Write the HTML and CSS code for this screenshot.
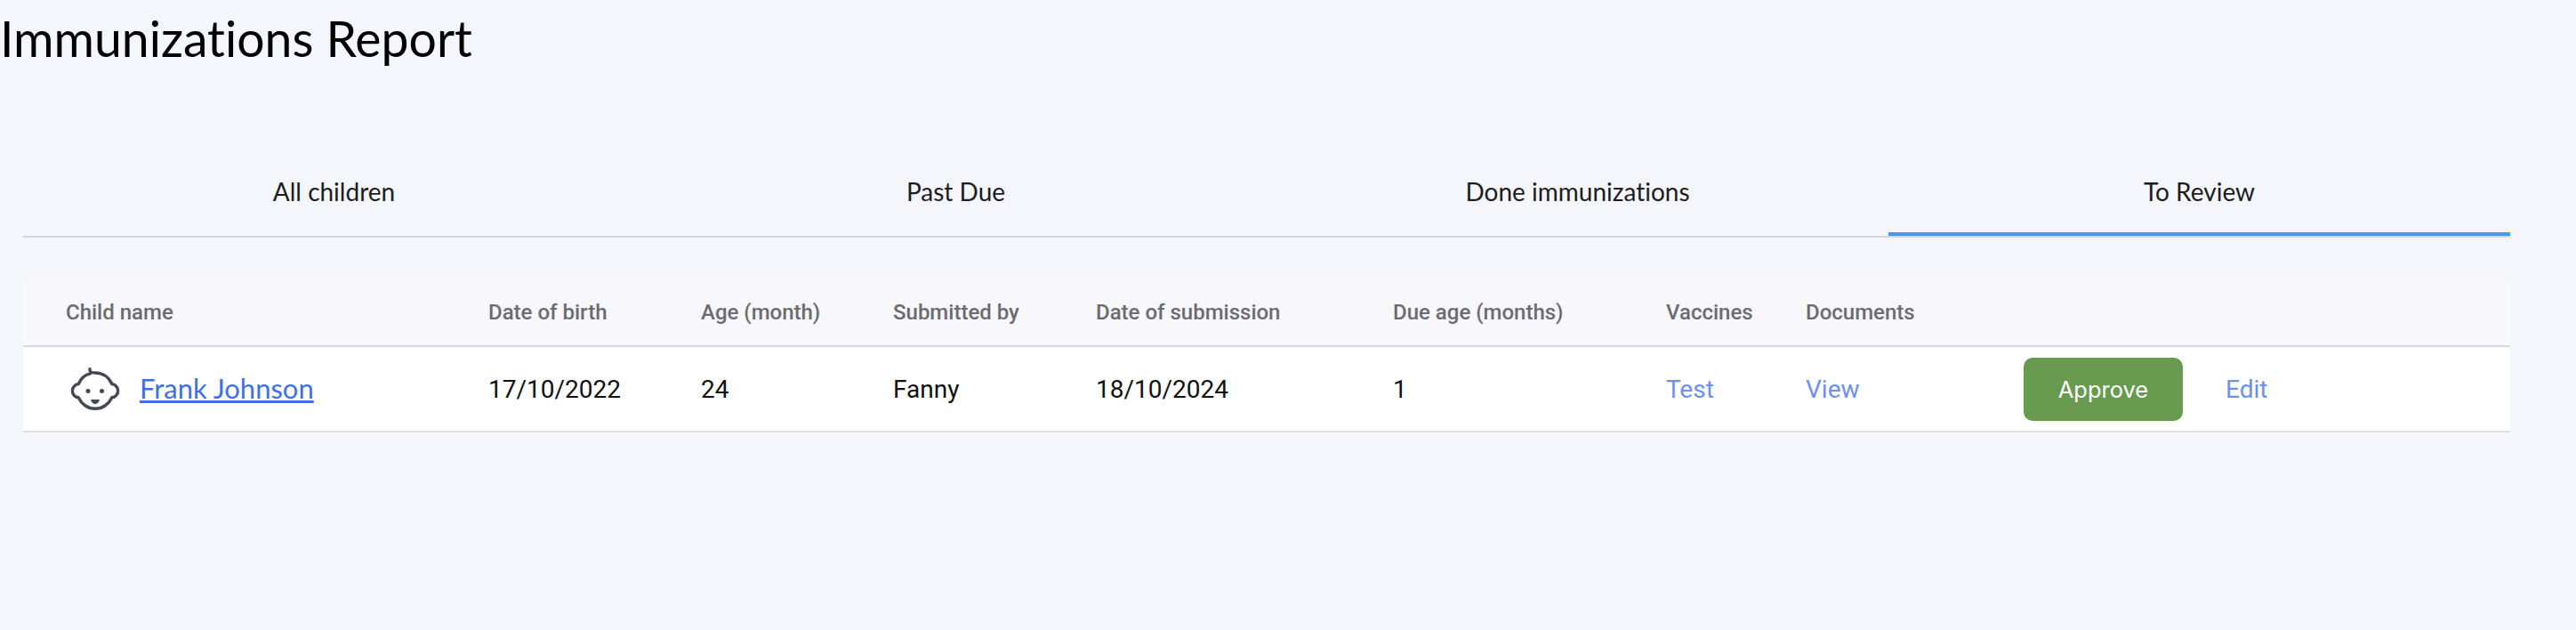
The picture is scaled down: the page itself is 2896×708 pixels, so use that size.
FILE: index.html
```html
<!DOCTYPE html>
<html lang="en">
<head>
  <meta charset="UTF-8" />
  <title>Immunizations Report</title>
  <link rel="stylesheet" href="styles.css">
</head>
<body>
  <h1 class="page-title">Immunizations Report</h1>
  <div class="report">
    <div class="tabs">
      <div class="tab">All children</div>
      <div class="tab">Past Due</div>
      <div class="tab">Done immunizations</div>
      <div class="tab tab-active">To Review</div>
    </div>
    <div class="table">
      <div class="table-row table-head">
        <div>Child name</div>
        <div>Date of birth</div>
        <div>Age (month)</div>
        <div>Submitted by</div>
        <div>Date of submission</div>
        <div>Due age (months)</div>
        <div>Vaccines</div>
        <div>Documents</div>
        <div></div>
      </div>
      <div class="table-row table-body">
        <div class="child">
          <svg class="child-icon" viewBox="0 0 56 48" width="56" height="48" fill="none" stroke="#454a52" stroke-width="3.4" stroke-linecap="round" stroke-linejoin="round">
            <path d="M22 1.800C21.500 5 24 6 28 6C36.500 6 43.500 11 46.800 18.500A7.700 7.700 0 0 1 46.800 33.800C43.500 41 36.500 46.300 28 46.300C19.500 46.300 12.500 41 9.200 33.800A7.700 7.700 0 0 1 9.200 18.500C12 12 17 8 22.500 6.800"/>
            <circle cx="20" cy="26.500" r="2.500" fill="#454a52" stroke="none"/>
            <circle cx="35.500" cy="26.500" r="2.500" fill="#454a52" stroke="none"/>
            <path d="M23 36H33C32.500 39 30 41 28 41C26 41 23.500 39 23 36Z" fill="#454a52" stroke="none"/>
          </svg>
          <a class="child-link" href="#">Frank Johnson</a>
        </div>
        <div>17/10/2022</div>
        <div>24</div>
        <div>Fanny</div>
        <div>18/10/2024</div>
        <div>1</div>
        <div><a class="link" href="#">Test</a></div>
        <div><a class="link" href="#">View</a></div>
        <div class="actions">
          <button class="btn-approve">Approve</button>
          <a class="link link-edit" href="#">Edit</a>
        </div>
      </div>
    </div>
  </div>
</body>
</html>
```

FILE: styles.css
```css
body {
  margin: 0;
  background: #f5f6fb;
  font-family: Roboto, Arial, sans-serif;
  color: #111;
}
.page-title {
  margin: 0;
  padding-top: 10px;
  font-family: Lato, Arial, sans-serif;
  font-size: 55.300px;
  line-height: 66px;
  font-weight: 400;
  font-variant-ligatures: none;
  color: #000;
}
.report {
  padding: 0 74px 0 26px;
}
.tabs {
  display: grid;
  grid-template-columns: repeat(4, 1fr);
  margin-top: 104px;
  border-bottom: 2px solid #d3d6de;
}
.tab {
  padding: 10px 0 21px;
  height: 50px;
  line-height: 50px;
  text-align: center;
  font-family: Lato, Arial, sans-serif;
  font-size: 28px;
  font-variant-ligatures: none;
  color: #1c1c1f;
  border-bottom: 4px solid transparent;
}
.tab-active {
  border-bottom-color: #4a95ea;
}
.table {
  margin-top: 47px;
}
.table-row {
  display: grid;
  grid-template-columns: 475px 239px 216px 228px 334px 307px 157px 245px 1fr;
  padding-left: 48px;
  align-items: center;
}
.table-head {
  height: 74px;
  background: #f7f7fc;
  border-bottom: 2px solid #d8d8de;
  font-size: 24px;
  font-weight: 500;
  color: #6b6b70;
}
.table-body {
  height: 94px;
  background: #fff;
  border-bottom: 2px solid #e0e0e3;
  font-size: 28px;
}
.child {
  display: flex;
  align-items: center;
  gap: 22px;
  padding-left: 5px;
}
.child-link {
  margin-bottom: 3px;
  font-family: Lato, Arial, sans-serif;
  font-size: 31px;
  font-variant-ligatures: none;
  color: #3f6fe3;
  text-decoration-thickness: 3px;
}
.link {
  color: #6d8ff0;
  text-decoration: none;
}
.actions {
  display: flex;
  align-items: center;
  gap: 48px;
}
.btn-approve {
  width: 179px;
  height: 71px;
  border: none;
  border-radius: 10px;
  background: #689a4f;
  color: #fff;
  font-family: Inter, Arial, sans-serif;
  font-size: 25.500px;
}
```
